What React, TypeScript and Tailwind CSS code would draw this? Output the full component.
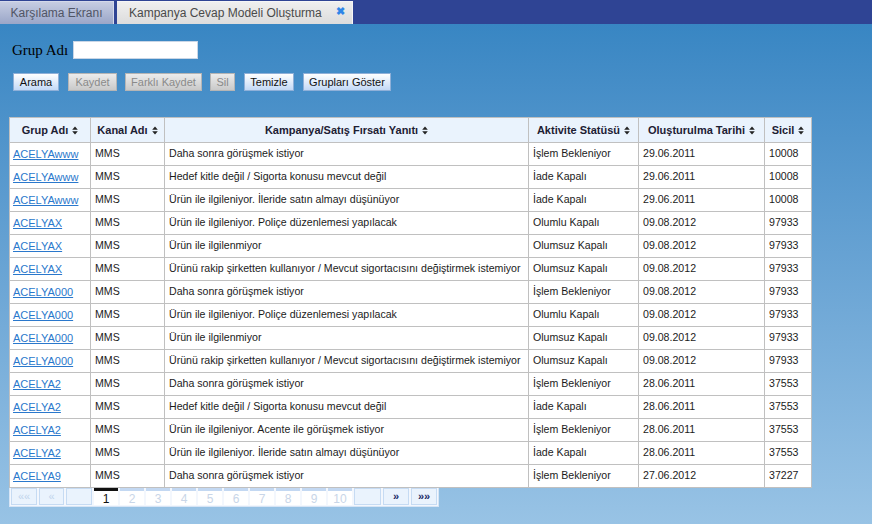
import React from "react";

const rows: [string, string, string, string, string][] = [
  ["ACELYAwww", "Daha sonra görüşmek istiyor", "İşlem Bekleniyor", "29.06.2011", "10008"],
  ["ACELYAwww", "Hedef kitle değil / Sigorta konusu mevcut değil", "İade Kapalı", "29.06.2011", "10008"],
  ["ACELYAwww", "Ürün ile ilgileniyor. İleride satın almayı düşünüyor", "İade Kapalı", "29.06.2011", "10008"],
  ["ACELYAX", "Ürün ile ilgileniyor. Poliçe düzenlemesi yapılacak", "Olumlu Kapalı", "09.08.2012", "97933"],
  ["ACELYAX", "Ürün ile ilgilenmiyor", "Olumsuz Kapalı", "09.08.2012", "97933"],
  ["ACELYAX", "Ürünü rakip şirketten kullanıyor / Mevcut sigortacısını değiştirmek istemiyor", "Olumsuz Kapalı", "09.08.2012", "97933"],
  ["ACELYA000", "Daha sonra görüşmek istiyor", "İşlem Bekleniyor", "09.08.2012", "97933"],
  ["ACELYA000", "Ürün ile ilgileniyor. Poliçe düzenlemesi yapılacak", "Olumlu Kapalı", "09.08.2012", "97933"],
  ["ACELYA000", "Ürün ile ilgilenmiyor", "Olumsuz Kapalı", "09.08.2012", "97933"],
  ["ACELYA000", "Ürünü rakip şirketten kullanıyor / Mevcut sigortacısını değiştirmek istemiyor", "Olumsuz Kapalı", "09.08.2012", "97933"],
  ["ACELYA2", "Daha sonra görüşmek istiyor", "İşlem Bekleniyor", "28.06.2011", "37553"],
  ["ACELYA2", "Hedef kitle değil / Sigorta konusu mevcut değil", "İade Kapalı", "28.06.2011", "37553"],
  ["ACELYA2", "Ürün ile ilgileniyor. Acente ile görüşmek istiyor", "İşlem Bekleniyor", "28.06.2011", "37553"],
  ["ACELYA2", "Ürün ile ilgileniyor. İleride satın almayı düşünüyor", "İade Kapalı", "28.06.2011", "37553"],
  ["ACELYA9", "Daha sonra görüşmek istiyor", "İşlem Bekleniyor", "27.06.2012", "37227"],
];

function SortIcon() {
  return (
    <svg width="6" height="9" viewBox="0 0 6 9" className="inline-block ml-[4px] align-[-1px]">
      <path d="M3 0.5 L5.8 3.8 L0.2 3.8 Z" fill="#222" />
      <path d="M3 8.5 L5.8 5.2 L0.2 5.2 Z" fill="#222" />
    </svg>
  );
}

function Btn({ label, w, disabled }: { label: string; w: string; disabled?: boolean }) {
  return (
    <div
      className={
        "h-[18px] flex items-center justify-center text-[11px] border " +
        w +
        (disabled
          ? " bg-linear-to-b from-[#ececec] to-[#c9c9c9] border-[#b5b5b5] text-[#8a8a8a]"
          : " bg-linear-to-b from-[#ffffff] to-[#c3d9f6] border-[#8fb0d8] text-[#111]")
      }
    >
      {label}
    </div>
  );
}

const headers = [
  "Grup Adı",
  "Kanal Adı",
  "Kampanya/Satış Fırsatı Yanıtı",
  "Aktivite Statüsü",
  "Oluşturulma Tarihi",
  "Sicil",
];

export default function App() {
  return (
    <div
      className="w-[872px] h-[524px] overflow-hidden flex flex-col"
      style={{ fontFamily: '"Liberation Sans", Arial, sans-serif' }}
    >
      {/* tab bar */}
      <div className="h-[24px] bg-[#2f4494] flex items-end shrink-0">
        <div className="w-[114px] h-[23px] bg-linear-to-b from-[#c6cde2] to-[#9aa6c8] border-t border-r border-[#d4d9ea] flex items-center justify-center text-[12px] text-[#505565]">
          Karşılama Ekranı
        </div>
        <div className="ml-[3px] w-[236px] h-[23px] bg-linear-to-b from-[#efefef] to-[#dcdcdc] border-t border-r border-[#f6f6f6] flex items-center text-[12px] text-[#4a4a4a] relative">
          <span className="pl-[12px]">Kampanya Cevap Modeli Oluşturma</span>
          <span className="absolute left-[219px] top-[4px] text-[11px] text-[#2f86e8] font-bold leading-none">✖</span>
        </div>
      </div>

      {/* content */}
      <div className="flex-1 bg-linear-to-b from-[#3886c3] to-[#98c3e5] pl-[9px]">
        <div className="flex items-center mt-[17px] pl-[3px]">
          <span
            className="text-[15px] text-black leading-none"
            style={{ fontFamily: '"Liberation Serif", "Times New Roman", serif' }}
          >
            Grup Adı
          </span>
          <div className="ml-[5px] w-[125px] h-[18px] bg-white border border-[#c9d6e6]" />
        </div>

        <div className="flex items-center mt-[14px] pl-[4px]">
          <Btn label="Arama" w="w-[46px]" />
          <div className="w-[9px]" />
          <Btn label="Kaydet" w="w-[49px]" disabled />
          <div className="w-[8px]" />
          <Btn label="Farklı Kaydet" w="w-[77px]" disabled />
          <div className="w-[8px]" />
          <Btn label="Sil" w="w-[25px]" disabled />
          <div className="w-[9px]" />
          <Btn label="Temizle" w="w-[50px]" />
          <div className="w-[9px]" />
          <Btn label="Grupları Göster" w="w-[88px]" />
        </div>

        <table className="mt-[26px] table-fixed border-collapse bg-white text-[10.6px] text-[#1b1b1b] w-[802px]">
          <colgroup>
            <col className="w-[81px]" />
            <col className="w-[74px]" />
            <col className="w-[364px]" />
            <col className="w-[110px]" />
            <col className="w-[126px]" />
            <col className="w-[47px]" />
          </colgroup>
          <thead>
            <tr className="h-[25px] bg-[#eaf3fd]">
              {headers.map((h) => (
                <th
                  key={h}
                  className="border border-[#c0c0c0] font-bold text-[11px] text-[#1d2033] whitespace-nowrap text-center px-0"
                >
                  {h}
                  <SortIcon />
                </th>
              ))}
            </tr>
          </thead>
          <tbody>
            {rows.map((r, i) => (
              <tr key={i} className="h-[23px]">
                <td className="border border-[#c0c0c0] pl-[3px] whitespace-nowrap text-[11px]">
                  <span className="text-[#2a78cc] underline">{r[0]}</span>
                </td>
                <td className="border border-[#c0c0c0] pl-[4px] whitespace-nowrap">MMS</td>
                <td className="border border-[#c0c0c0] pl-[4px] whitespace-nowrap overflow-hidden">{r[1]}</td>
                <td className="border border-[#c0c0c0] pl-[4px] whitespace-nowrap">{r[2]}</td>
                <td className="border border-[#c0c0c0] pl-[4px] whitespace-nowrap">{r[3]}</td>
                <td className="border border-[#c0c0c0] pl-[4px] whitespace-nowrap">{r[4]}</td>
              </tr>
            ))}
          </tbody>
        </table>

        {/* pager */}
        <div className="w-[430px] h-[19px] bg-[#f3f7fd] border border-[#d6e4f5] border-t-0 flex items-stretch px-[1px] pb-[1px] gap-[2px] text-[11px]">
          <div className="w-[26px] border border-[#c6dbf3] bg-[#eaf3fd] flex items-center justify-center text-[#c0d4ec]">««</div>
          <div className="w-[25px] border border-[#c6dbf3] bg-[#eaf3fd] flex items-center justify-center text-[#c0d4ec]">«</div>
          <div className="w-[26px] border border-[#c6dbf3] bg-[#eaf3fd]" />
          {[1, 2, 3, 4, 5, 6, 7, 8, 9, 10].map((n) => (
            <div
              key={n}
              className={
                "w-[24px] bg-white flex items-center justify-center border-t-[3px] pt-[1px] text-[12px] " +
                (n === 1 ? "border-[#111] text-[#111]" : "border-[#c3d8f2] text-[#c9d6e8]")
              }
            >
              {n}
            </div>
          ))}
          <div className="w-[27px] border border-[#c6dbf3] bg-[#eaf3fd]" />
          <div className="w-[26px] border border-[#c6dbf3] bg-[#eaf3fd] flex items-center justify-center text-[#1a2a66] font-bold">»</div>
          <div className="w-[26px] border border-[#c6dbf3] bg-[#eaf3fd] flex items-center justify-center text-[#1a2a66] font-bold">»»</div>
        </div>
      </div>
    </div>
  );
}
